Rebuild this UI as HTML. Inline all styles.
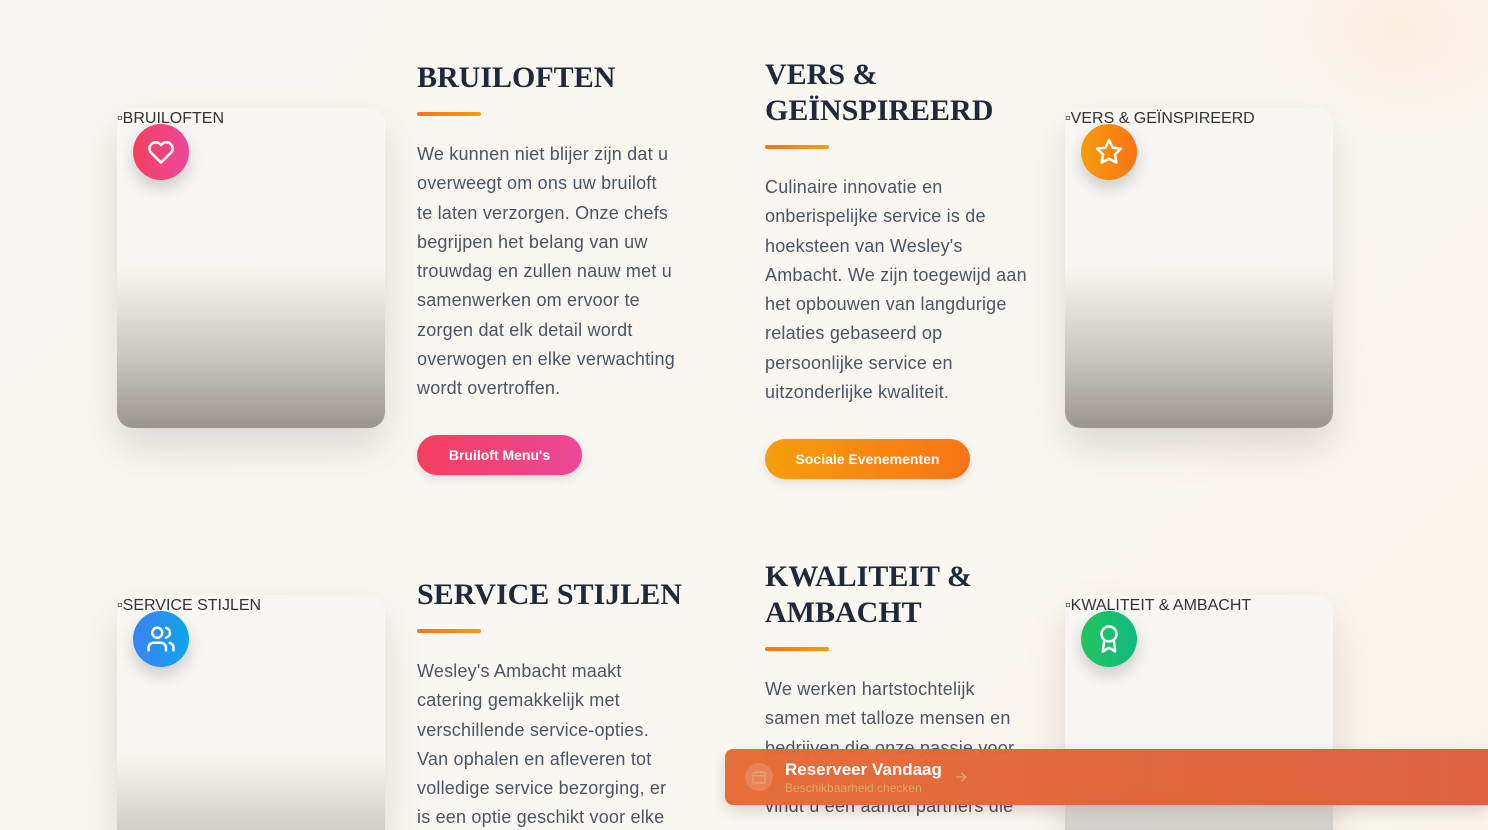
<!DOCTYPE html>
<html><head><meta charset="utf-8"><style>
*{margin:0;padding:0;box-sizing:border-box}
html{width:1488px;height:830px;overflow:hidden}
body{width:1488px;height:830px;overflow:hidden;position:relative;font-family:"Liberation Sans",sans-serif;background:linear-gradient(135deg,#f8f6f2 0%,#faf7f2 60%,#fbf3ea 100%)}
#wrap{position:absolute;left:0;top:0;width:1488px;height:830px;overflow:hidden}
.glow{position:absolute;right:-60px;top:-80px;width:300px;height:220px;border-radius:50%;background:radial-gradient(rgba(251,232,212,0.6) 0%,rgba(251,232,212,0) 70%)}
.card{position:absolute;width:268px;height:320px;border-radius:16px;background:linear-gradient(180deg,#f9f7f3 0%,#f8f6f2 50%,#c9c6c0 78%,#9a958f 100%);box-shadow:0 20px 40px rgba(0,0,0,0.12)}
.card.b{height:235px;border-radius:16px 16px 0 0;background-size:100% 320px;background-repeat:no-repeat}
.alt{position:absolute;font-size:16px;color:#333;white-space:nowrap}
.icon{position:absolute;width:56px;height:56px;border-radius:50%;box-shadow:0 8px 16px rgba(0,0,0,0.18);display:flex;align-items:center;justify-content:center}
h2{position:absolute;font-family:"Liberation Serif",serif;font-weight:bold;font-size:30px;line-height:36px;color:#1f2937;white-space:nowrap}
.bar{position:absolute;width:64px;height:4px;border-radius:2px;background:linear-gradient(90deg,#f97316,#f59e0b)}
p{position:absolute;font-size:18px;line-height:29.3px;color:#4b5563;white-space:nowrap;letter-spacing:0.2px;overflow:hidden}
.btn{position:absolute;height:40px;border-radius:20px;color:#fff;font-weight:bold;font-size:14px;display:flex;align-items:center;justify-content:center;box-shadow:0 4px 10px rgba(0,0,0,0.1)}
.res{position:absolute;left:725px;top:749px;width:763px;height:56px;border-radius:8px 0 0 8px;background:linear-gradient(90deg,#e66a34,#dc5e3c);opacity:.97;box-shadow:0 6px 16px rgba(0,0,0,0.15)}
</style></head><body><div id="wrap">
<div class="glow"></div>

<div class="card" style="left:117px;top:108px"></div>
<div class="alt" style="left:117px;top:110px">▫BRUILOFTEN</div>
<div class="icon" style="left:133px;top:124px;background:linear-gradient(90deg,#f43f5e,#ec4899)"><svg width="30" height="30" viewBox="0 0 24 24" fill="none" stroke="#fff" stroke-width="2" stroke-linejoin="round"><path d="M12 20.5l-7.8-7.7a5 5 0 0 1 7.1-7.1l.7.7.7-.7a5 5 0 0 1 7.1 7.1z"/></svg></div>
<h2 style="left:417px;top:60px">BRUILOFTEN</h2>
<div class="bar" style="left:417px;top:112px"></div>
<p style="left:417px;top:140px">We kunnen niet blijer zijn dat u<br>overweegt om ons uw bruiloft<br>te laten verzorgen. Onze chefs<br>begrijpen het belang van uw<br>trouwdag en zullen nauw met u<br>samenwerken om ervoor te<br>zorgen dat elk detail wordt<br>overwogen en elke verwachting<br>wordt overtroffen.</p>
<div class="btn" style="left:417px;top:435px;width:165px;background:linear-gradient(90deg,#f43f5e,#ec4899)">Bruiloft Menu's</div>

<h2 style="left:765px;top:57px">VERS &amp;<br>GEÏNSPIREERD</h2>
<div class="bar" style="left:765px;top:145px"></div>
<p style="left:765px;top:173px">Culinaire innovatie en<br>onberispelijke service is de<br>hoeksteen van Wesley's<br>Ambacht. We zijn toegewijd aan<br>het opbouwen van langdurige<br>relaties gebaseerd op<br>persoonlijke service en<br>uitzonderlijke kwaliteit.</p>
<div class="btn" style="left:765px;top:439px;width:205px;background:linear-gradient(90deg,#f59e0b,#f97316)">Sociale Evenementen</div>
<div class="card" style="left:1065px;top:108px"></div>
<div class="alt" style="left:1065px;top:110px">▫VERS &amp; GEÏNSPIREERD</div>
<div class="icon" style="left:1081px;top:124px;background:linear-gradient(90deg,#f59e0b,#f97316)"><svg width="30" height="30" viewBox="0 0 24 24" fill="none" stroke="#fff" stroke-width="2" stroke-linejoin="round"><path d="M12 2.5l2.9 6 6.6.9-4.8 4.6 1.2 6.5L12 17.4l-5.9 3.1 1.2-6.5L2.5 9.4l6.6-.9z"/></svg></div>

<div class="card b" style="left:117px;top:595px"></div>
<div class="alt" style="left:117px;top:597px">▫SERVICE STIJLEN</div>
<div class="icon" style="left:133px;top:611px;background:linear-gradient(90deg,#3b82f6,#0ea5e9)"><svg width="30" height="30" viewBox="0 0 24 24" fill="none" stroke="#fff" stroke-width="2" stroke-linecap="round"><circle cx="9" cy="7" r="4"/><path d="M2 21v-2a4 4 0 0 1 4-4h6a4 4 0 0 1 4 4v2M16 3.1a4 4 0 0 1 0 7.8M22 21v-2a4 4 0 0 0-3-3.9"/></svg></div>
<h2 style="left:417px;top:577px">SERVICE STIJLEN</h2>
<div class="bar" style="left:417px;top:629px"></div>
<p style="left:417px;top:657px;height:173px">Wesley's Ambacht maakt<br>catering gemakkelijk met<br>verschillende service-opties.<br>Van ophalen en afleveren tot<br>volledige service bezorging, er<br>is een optie geschikt voor elke</p>

<h2 style="left:765px;top:559px">KWALITEIT &amp;<br>AMBACHT</h2>
<div class="bar" style="left:765px;top:647px"></div>
<p style="left:765px;top:675px;height:155px">We werken hartstochtelijk<br>samen met talloze mensen en<br>bedrijven die onze passie voor<br>...<br>vindt u een aantal partners die</p>
<div class="card b" style="left:1065px;top:595px"></div>
<div class="alt" style="left:1065px;top:597px">▫KWALITEIT &amp; AMBACHT</div>
<div class="icon" style="left:1081px;top:611px;background:linear-gradient(90deg,#22c55e,#10b981)"><svg width="30" height="30" viewBox="0 0 24 24" fill="none" stroke="#fff" stroke-width="2" stroke-linejoin="round"><circle cx="12" cy="8" r="6"/><path d="M8.2 12.9L7 22l5-3 5 3-1.2-9.1"/></svg></div>

<div class="res">
<div style="position:absolute;left:20px;top:14px;width:28px;height:28px;border-radius:50%;background:rgba(255,255,255,0.15);display:flex;align-items:center;justify-content:center"><svg width="16" height="16" viewBox="0 0 24 24" fill="none" stroke="#e2a460" stroke-width="2"><rect x="3" y="5" width="18" height="16" rx="2"/><path d="M3 10h18M8 3v4M16 3v4"/></svg></div>
<div style="position:absolute;left:60px;top:11px;color:#fff;font-weight:bold;font-size:17px">Reserveer Vandaag</div>
<div style="position:absolute;left:60px;top:32px;color:#e2a460;font-size:12px">Beschikbaarheid checken</div>
<svg style="position:absolute;left:228px;top:20px" width="16" height="16" viewBox="0 0 24 24" fill="none" stroke="#e2a460" stroke-width="2"><path d="M5 12h14M13 6l6 6-6 6"/></svg>
</div>
</div></body></html>
